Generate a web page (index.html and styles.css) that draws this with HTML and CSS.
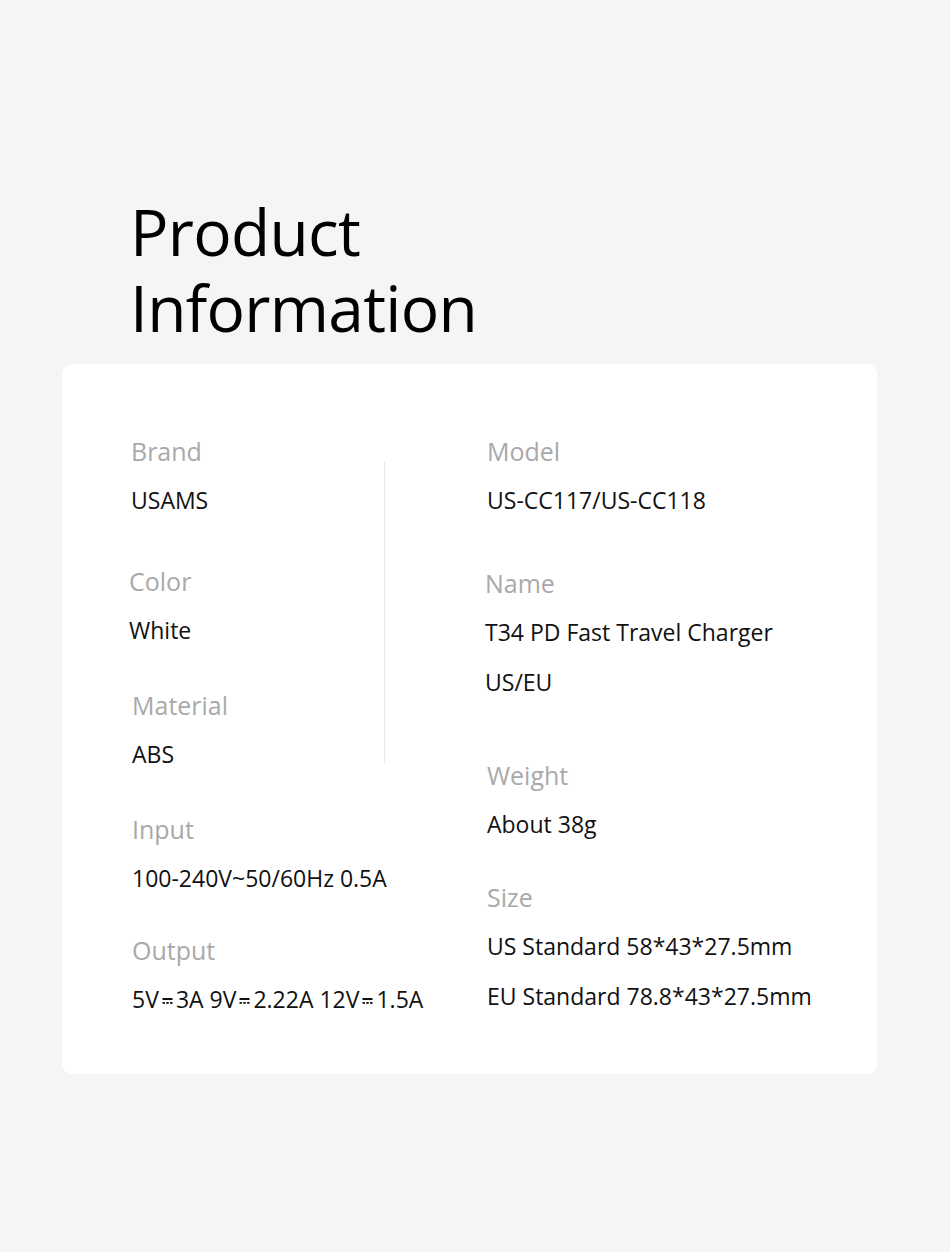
FILE: index.html
```html
<!DOCTYPE html>
<html lang="en">
<head>
    <meta charset="UTF-8">
    <meta name="viewport" content="width=device-width, initial-scale=1.0">
    <title>Product Information</title>
    <link rel="stylesheet" href="styles.css">
</head>
<body>
    <div class="page">
        <h1 class="title">Product<br>Information</h1>

        <div class="card">
            <div class="col col-left">
                <div class="top">
                    <div class="top-list">
                        <div class="spec">
                            <div class="label">Brand</div>
                            <div class="value">USAMS</div>
                        </div>
                        <div class="spec spec-color">
                            <div class="label">Color</div>
                            <div class="value">White</div>
                        </div>
                        <div class="spec spec-material">
                            <div class="label">Material</div>
                            <div class="value">ABS</div>
                        </div>
                    </div>
                    <div class="divider"></div>
                </div>
                <div class="spec spec-input">
                    <div class="label">Input</div>
                    <div class="value">100-240V~50/60Hz 0.5A</div>
                </div>
                <div class="spec spec-output">
                    <div class="label">Output</div>
                    <div class="value">5V<span class="dc"><svg viewBox="0 0 10 6" width="11" height="6"><rect x="0" y="0" width="10" height="2" fill="currentColor"/><rect x="0" y="4" width="2.4" height="1.8" fill="currentColor"/><rect x="3.8" y="4" width="2.4" height="1.8" fill="currentColor"/><rect x="7.6" y="4" width="2.4" height="1.8" fill="currentColor"/></svg></span>3A 9V<span class="dc"><svg viewBox="0 0 10 6" width="11" height="6"><rect x="0" y="0" width="10" height="2" fill="currentColor"/><rect x="0" y="4" width="2.4" height="1.8" fill="currentColor"/><rect x="3.8" y="4" width="2.4" height="1.8" fill="currentColor"/><rect x="7.6" y="4" width="2.4" height="1.8" fill="currentColor"/></svg></span>2.22A 12V<span class="dc"><svg viewBox="0 0 10 6" width="11" height="6"><rect x="0" y="0" width="10" height="2" fill="currentColor"/><rect x="0" y="4" width="2.4" height="1.8" fill="currentColor"/><rect x="3.8" y="4" width="2.4" height="1.8" fill="currentColor"/><rect x="7.6" y="4" width="2.4" height="1.8" fill="currentColor"/></svg></span>1.5A</div>
                </div>
            </div>

            <div class="col col-right">
                <div class="spec">
                    <div class="label">Model</div>
                    <div class="value">US-CC117/US-CC118</div>
                </div>
                <div class="spec spec-name">
                    <div class="label">Name</div>
                    <div class="value">T34 PD Fast Travel Charger</div>
                    <div class="value">US/EU</div>
                </div>
                <div class="spec spec-weight">
                    <div class="label">Weight</div>
                    <div class="value">About 38g</div>
                </div>
                <div class="spec spec-size">
                    <div class="label">Size</div>
                    <div class="value">US Standard 58*43*27.5mm</div>
                    <div class="value">EU Standard 78.8*43*27.5mm</div>
                </div>
            </div>
        </div>
    </div>
</body>
</html>
```

FILE: styles.css
```css
body {
    margin: 0;
    background-color: #f5f5f5;
    font-family: 'Open Sans', 'Noto Sans', sans-serif;
    color: #111;
}
.page {
    width: 950px;
    height: 1252px;
    box-sizing: border-box;
    padding: 194px 0 0 62px;
}
.title {
    margin: 0 0 18px 68px;
    font-size: 64px;
    line-height: 76px;
    font-weight: 400;
    color: #000;
    letter-spacing: -0.7px;
}
.card {
    width: 815px;
    box-sizing: border-box;
    background-color: #ffffff;
    border-radius: 10px;
    padding: 63px 0 50px 69px;
    display: flex;
}
.col-left {
    width: 254px;
}
.col-right {
    margin-left: 102px;
}
.top {
    display: flex;
}
.top-list {
    width: 253px;
}
.divider {
    width: 1px;
    background-color: #e6e6e6;
    margin: 35px 0 16px;
}
.spec {
    white-space: nowrap;
}
.label {
    font-size: 25px;
    line-height: 48px;
    color: #a9a9a9;
}
.value {
    font-size: 23px;
    line-height: 50px;
    color: #111;
}
.dc {
    display: inline-block;
    margin: 0 3px;
    vertical-align: 4px;
}
.dc svg {
    display: block;
}
.spec-color {
    margin-top: 32px;
    margin-left: -2px;
}
.spec-material {
    margin-top: 26px;
    margin-left: 1px;
}
.spec-input {
    margin-top: 26px;
    margin-left: 1px;
}
.spec-output {
    margin-top: 23px;
    margin-left: 1px;
}
.spec-name {
    margin-top: 34px;
    margin-left: -2px;
}
.spec-weight {
    margin-top: 44px;
}
.spec-size {
    margin-top: 24px;
}
```
